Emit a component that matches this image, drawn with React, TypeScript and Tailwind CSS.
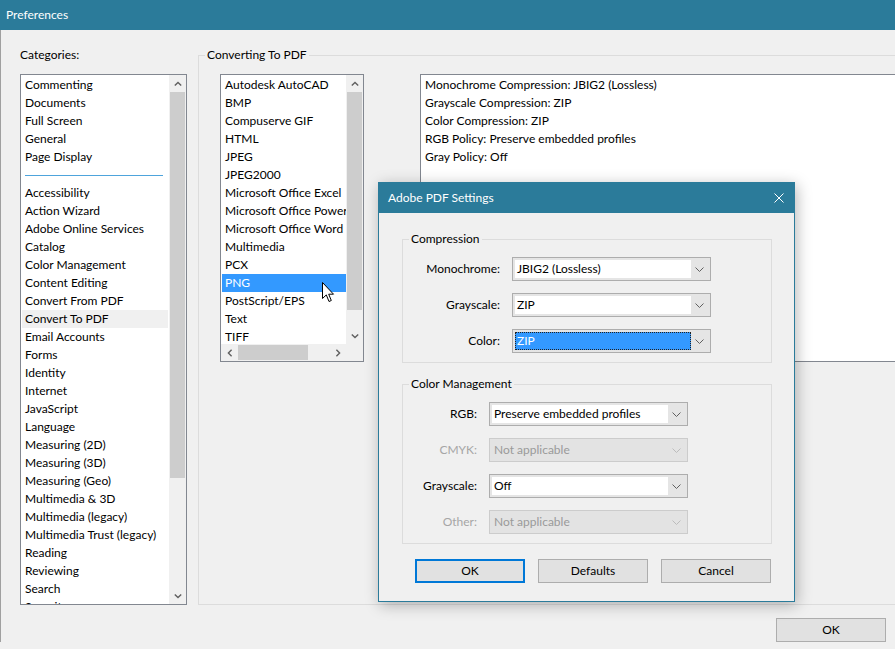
import React from "react";

type Dir = "up" | "down" | "left" | "right";

// small scroll-arrow chevrons
function Arrow({ dir }: { dir: Dir }) {
  const vertical = dir === "up" || dir === "down";
  const pts = {
    up: "0.8,4.6 4,1.4 7.2,4.6",
    down: "0.8,1.4 4,4.6 7.2,1.4",
    left: "4.6,0.8 1.4,4 4.6,7.2",
    right: "1.4,0.8 4.6,4 1.4,7.2",
  }[dir];
  return (
    <svg
      width={vertical ? 8 : 6}
      height={vertical ? 6 : 8}
      viewBox={vertical ? "0 0 8 6" : "0 0 6 8"}
    >
      <polyline points={pts} fill="none" stroke="#606060" strokeWidth="1.4" />
    </svg>
  );
}

function ComboChevron({ disabled }: { disabled?: boolean }) {
  return (
    <svg width="9" height="5" viewBox="0 0 9 5">
      <polyline
        points="0.5,0.5 4.5,4.5 8.5,0.5"
        fill="none"
        stroke={disabled ? "#bcbcbc" : "#606060"}
        strokeWidth="1"
      />
    </svg>
  );
}

const categories = [
  "Commenting",
  "Documents",
  "Full Screen",
  "General",
  "Page Display",
  "---",
  "Accessibility",
  "Action Wizard",
  "Adobe Online Services",
  "Catalog",
  "Color Management",
  "Content Editing",
  "Convert From PDF",
  "Convert To PDF",
  "Email Accounts",
  "Forms",
  "Identity",
  "Internet",
  "JavaScript",
  "Language",
  "Measuring (2D)",
  "Measuring (3D)",
  "Measuring (Geo)",
  "Multimedia & 3D",
  "Multimedia (legacy)",
  "Multimedia Trust (legacy)",
  "Reading",
  "Reviewing",
  "Search",
  "Security",
];

const formats = [
  "Autodesk AutoCAD",
  "BMP",
  "Compuserve GIF",
  "HTML",
  "JPEG",
  "JPEG2000",
  "Microsoft Office Excel",
  "Microsoft Office PowerPoint",
  "Microsoft Office Word",
  "Multimedia",
  "PCX",
  "PNG",
  "PostScript/EPS",
  "Text",
  "TIFF",
];

const summary = [
  "Monochrome Compression: JBIG2 (Lossless)",
  "Grayscale Compression: ZIP",
  "Color Compression: ZIP",
  "RGB Policy: Preserve embedded profiles",
  "Gray Policy: Off",
];

function Combo({
  value,
  disabled,
  focused,
}: {
  value: string;
  disabled?: boolean;
  focused?: boolean;
}) {
  return (
    <div
      className={
        disabled
          ? "flex h-[24px] w-[199px] border border-[#cccccc] bg-[#e3e3e3] p-[2px]"
          : "flex h-[24px] w-[199px] border border-[#adadad] bg-[#e5e5e5] p-[2px]"
      }
    >
      <div
        className={
          focused
            ? "flex-1 border border-dotted border-[#222] bg-[#3399ff] pl-[1px] leading-[16px] text-white"
            : disabled
              ? "flex-1 bg-[#e3e3e3] pl-[2px] leading-[18px] text-[#9a9a9a]"
              : "flex-1 bg-white pl-[2px] leading-[18px]"
        }
      >
        {value}
      </div>
      <div className="flex w-[17px] items-center justify-center">
        <ComboChevron disabled={disabled} />
      </div>
    </div>
  );
}

function Button({ label, primary }: { label: string; primary?: boolean }) {
  return (
    <div
      className={
        primary
          ? "flex h-[24px] w-[110px] items-center justify-center border-2 border-[#0078d7] bg-[#e1e1e1]"
          : "flex h-[24px] w-[110px] items-center justify-center border border-[#adadad] bg-[#e1e1e1]"
      }
    >
      {label}
    </div>
  );
}

function Cursor() {
  return (
    <svg width="13" height="21" viewBox="0 0 13 21">
      <path
        d="M0.5,0.5 L0.5,16.5 L4.3,12.9 L7,19.5 L9.3,18.5 L6.7,12.2 L11.5,12.2 Z"
        fill="white"
        stroke="black"
        strokeWidth="1"
        strokeLinejoin="miter"
      />
    </svg>
  );
}

function AdobeSettingsDialog() {
  return (
    <div className="absolute left-[378px] top-[182px] flex h-[420px] w-[417px] flex-col border border-[#2b7b9a] bg-[#f0f0f0] shadow-[2px_3px_14px_rgba(0,0,0,0.28)]">
      {/* caption */}
      <div className="flex h-[30px] shrink-0 items-center justify-between bg-[#2b7b9a] pl-[9px] pr-[10px] text-white">
        <span>Adobe PDF Settings</span>
        <svg width="10" height="10" viewBox="0 0 10 10">
          <path d="M0.5,0.5 L9.5,9.5 M9.5,0.5 L0.5,9.5" stroke="white" strokeWidth="1" />
        </svg>
      </div>

      <div className="flex flex-col pl-[23px] pr-[22px] pt-[18px]">
        <fieldset className="border border-[#dcdcdc] pb-[9px]">
          <legend className="ml-[6px] px-[2px] leading-[16px]">Compression</legend>
          <div className="mt-[10px] flex flex-col gap-[12px]">
            {[
              ["Monochrome:", "JBIG2 (Lossless)", false],
              ["Grayscale:", "ZIP", false],
              ["Color:", "ZIP", true],
            ].map(([label, value, focused]) => (
              <div key={label as string} className="flex items-center gap-[12px]">
                <div className="w-[97px] text-right">{label}</div>
                <Combo value={value as string} focused={focused as boolean} />
              </div>
            ))}
          </div>
        </fieldset>

        <fieldset className="mt-[13px] border border-[#dcdcdc] pb-[9px]">
          <legend className="ml-[6px] px-[2px] leading-[16px]">Color Management</legend>
          <div className="mt-[10px] flex flex-col gap-[12px]">
            {[
              ["RGB:", "Preserve embedded profiles", false],
              ["CMYK:", "Not applicable", true],
              ["Grayscale:", "Off", false],
              ["Other:", "Not applicable", true],
            ].map(([label, value, disabled]) => (
              <div key={label as string} className="flex items-center gap-[12px]">
                <div
                  className={
                    disabled ? "w-[74px] text-right text-[#a6a6a6]" : "w-[74px] text-right"
                  }
                >
                  {label}
                </div>
                <Combo value={value as string} disabled={disabled as boolean} />
              </div>
            ))}
          </div>
        </fieldset>

        <div className="mt-[15px] flex gap-[13px] pl-[13px]">
          <Button label="OK" primary />
          <Button label="Defaults" />
          <Button label="Cancel" />
        </div>
      </div>
    </div>
  );
}

export default function App() {
  return (
    <div className="relative h-[649px] w-[895px] overflow-hidden bg-[#f0f0f0] font-['Lato',sans-serif] text-[12px] text-black">
      {/* window caption */}
      <div className="flex h-[30px] items-center bg-[#2b7b9a] pl-[6px] text-white">
        Preferences
      </div>

      <div className="border-l border-[#a0a0a0]">
        <div className="flex pl-[19px] pt-[17px]">
          {/* categories */}
          <div className="flex w-[167px] shrink-0 flex-col">
            <div className="leading-[16px]">Categories:</div>
            <div className="mt-[11px] flex h-[531px] overflow-hidden border border-[#828790] bg-white">
              <div className="flex-1 overflow-hidden pt-[1px]">
                {categories.map((c) =>
                  c === "---" ? (
                    <div key={c} className="flex h-[18px] items-center pl-[4px] pr-[4px]">
                      <div className="h-px w-[138px] bg-[#4ea4dc]" />
                    </div>
                  ) : (
                    <div
                      key={c}
                      className={
                        c === "Convert To PDF"
                          ? "mx-[1px] h-[18px] whitespace-nowrap bg-[#f0f0f0] pl-[3px] leading-[18px]"
                          : "mx-[1px] h-[18px] whitespace-nowrap pl-[3px] leading-[18px]"
                      }
                    >
                      {c}
                    </div>
                  ),
                )}
              </div>
              <div className="flex w-[17px] flex-col bg-[#f0f0f0]">
                <div className="flex h-[17px] items-center justify-center">
                  <Arrow dir="up" />
                </div>
                <div className="mx-[1px] h-[386px] bg-[#cdcdcd]" />
                <div className="flex-1" />
                <div className="flex h-[17px] items-center justify-center">
                  <Arrow dir="down" />
                </div>
              </div>
            </div>
          </div>

          {/* converting to PDF group */}
          <fieldset className="ml-[11px] w-[740px] shrink-0 border border-[#dcdcdc] pb-[47px]">
            <legend className="ml-[6px] px-[2px] leading-[16px]">Converting To PDF</legend>
            <div className="mt-[11px] flex items-start gap-[56px] pl-[21px]">
              <div className="relative grid h-[288px] w-[144px] grid-cols-[1fr_17px] grid-rows-[1fr_17px] border border-[#828790] bg-white">
                <div className="overflow-hidden pt-[1px]">
                  {formats.map((f) => (
                    <div
                      key={f}
                      className={
                        f === "PNG"
                          ? "ml-[1px] h-[18px] whitespace-nowrap bg-[#3399ff] pl-[3px] leading-[18px] text-white"
                          : "ml-[1px] h-[18px] whitespace-nowrap pl-[3px] leading-[18px]"
                      }
                    >
                      {f}
                    </div>
                  ))}
                </div>
                <div className="flex flex-col bg-[#f0f0f0]">
                  <div className="flex h-[17px] items-center justify-center">
                    <Arrow dir="up" />
                  </div>
                  <div className="mx-[1px] h-[218px] bg-[#cdcdcd]" />
                  <div className="flex-1" />
                  <div className="flex h-[17px] items-center justify-center">
                    <Arrow dir="down" />
                  </div>
                </div>
                <div className="flex bg-[#f0f0f0]">
                  <div className="flex w-[17px] items-center justify-center">
                    <Arrow dir="left" />
                  </div>
                  <div className="my-[1px] w-[70px] bg-[#cdcdcd]" />
                  <div className="flex-1" />
                  <div className="flex w-[17px] items-center justify-center">
                    <Arrow dir="right" />
                  </div>
                </div>
                <div className="bg-[#f0f0f0]" />
                <div className="absolute left-[101px] top-[207px]">
                  <Cursor />
                </div>
              </div>

              <div className="h-[288px] w-[520px] border border-[#828790] bg-white pl-[4px] pt-[1px]">
                {summary.map((s) => (
                  <div key={s} className="h-[18px] leading-[18px]">
                    {s}
                  </div>
                ))}
              </div>
            </div>
          </fieldset>
        </div>

        <div className="flex justify-end pr-[9px] pt-[13px]">
          <Button label="OK" />
        </div>
      </div>

      <AdobeSettingsDialog />
    </div>
  );
}
